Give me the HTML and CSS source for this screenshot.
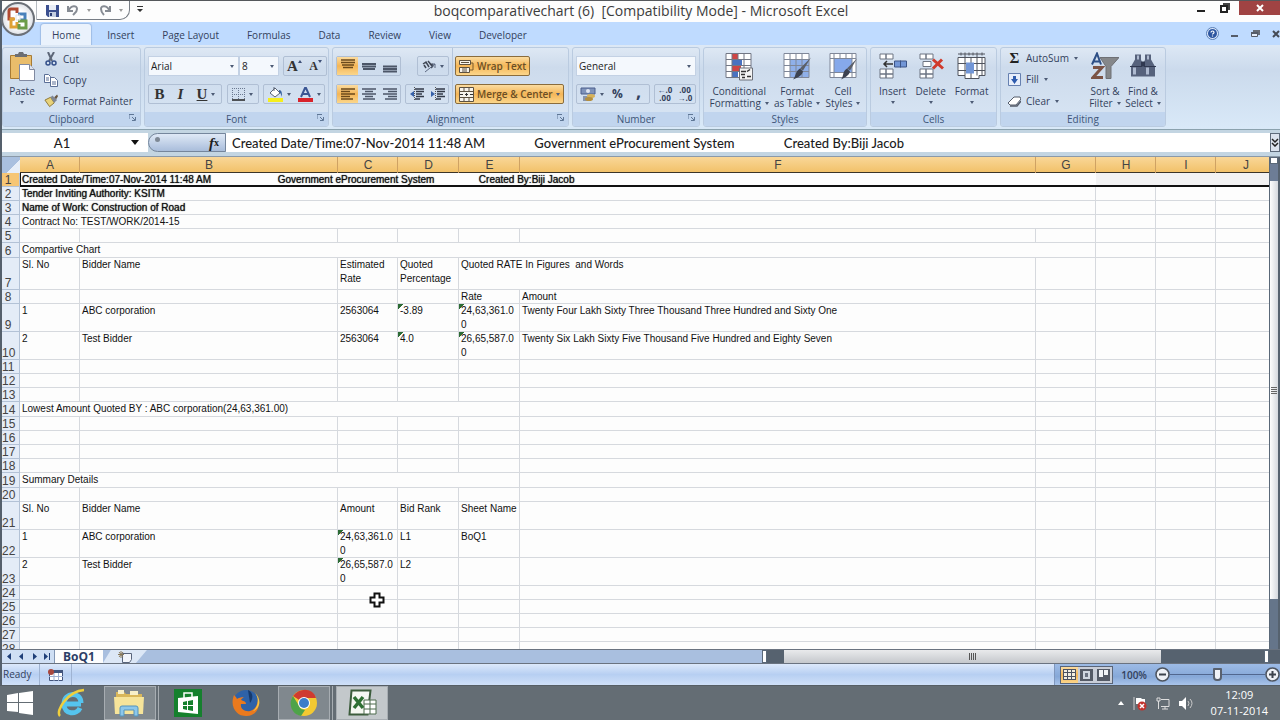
FILE: index.html
```html
<!DOCTYPE html>
<html lang="en">
<head>
    <meta charset="UTF-8">
    <meta name="viewport" content="width=device-width, initial-scale=1.0">
    <title>boqcomparativechart (6) [Compatibility Mode] - Microsoft Excel</title>
    <link rel="stylesheet" href="styles.css">
</head>
<body>
    <div class="window">
        <!-- title bar -->
        <header class="title-bar">
            <div class="quick-access">
                <button aria-label="Save">
                    <svg width="13" height="13" viewBox="0 0 13 13"><path d="M0 1h13v12H2L0 11z" fill="#3b4f8f"/><path d="M3 1h7v5H3z" fill="#e8edf6"/><path d="M3 8h7v5H3z" fill="#c4cfe2"/><path d="M4 9h2v3H4z" fill="#2b3d74"/></svg>
                </button>
                <button aria-label="Undo">
                    <svg width="12" height="12" viewBox="0 0 12 12"><path d="M1 2v5h5M1.500 6.500C4 1 10 1 10 5c0 3-2 4-4 6" fill="none" stroke="#868b93" stroke-width="2"/></svg>
                </button>
                <i class="arrow grey"></i>
                <button aria-label="Redo">
                    <svg width="12" height="12" viewBox="0 0 12 12"><path d="M11 2v5H6M10.500 6.500C8 1 2 1 2 5c0 3 1 4 3 6" fill="none" stroke="#868b93" stroke-width="2"/></svg>
                </button>
                <i class="arrow grey"></i>
            </div>
            <button class="qa-more" aria-label="Customize Quick Access Toolbar">
                <svg width="6" height="7" viewBox="0 0 6 7"><path d="M0 0h6v1H0zM0 3h6L3 6z" fill="#333"/></svg>
            </button>
            <h1>boqcomparativechart (6)&nbsp; [Compatibility Mode] - Microsoft Excel</h1>
            <div class="window-buttons">
                <button aria-label="Minimize"><svg width="8" height="10" viewBox="0 0 8 10"><path d="M0 7h8v2H0z" fill="#222"/></svg></button>
                <button aria-label="Restore"><svg width="10" height="10" viewBox="0 0 10 10"><path d="M1 3h6v6H1z" fill="#fff" stroke="#222" stroke-width="2"/><path d="M3 1h6v6" fill="none" stroke="#444" stroke-width="2"/></svg></button>
                <button class="close" aria-label="Close"><svg width="8" height="8" viewBox="0 0 8 8"><path d="M1 1l6 6M7 1L1 7" stroke="#fff" stroke-width="2"/></svg></button>
            </div>
        </header>
        <button class="office-button" aria-label="Office Button">
            <svg width="24" height="24" viewBox="0 0 24 24" fill="none" stroke-width="3"><path d="M8 12H3V4q0-2 2-2h6v4" stroke="#b04a32"/><path d="M12 7h7v6h-5" stroke="#4a82bb"/><path d="M9 12H5v8h6v-5" stroke="#dfa236"/><path d="M12 14h8v7h-7v-4" stroke="#6c9c48"/><path d="M10 8h4v5h-4z" stroke="#dfe3e8" stroke-width="1"/></svg>
        </button>

        <!-- ribbon tabs -->
        <nav class="tabs">
            <a href="#" class="active">Home</a>
            <a href="#">Insert</a>
            <a href="#">Page Layout</a>
            <a href="#">Formulas</a>
            <a href="#">Data</a>
            <a href="#">Review</a>
            <a href="#">View</a>
            <a href="#">Developer</a>
            <div class="doc-buttons">
                <button aria-label="Help"><svg width="13" height="13" viewBox="0 0 13 13"><circle cx="6.500" cy="6.500" r="6" fill="#dce8fa" stroke="#5b7fb5"/><circle cx="6.500" cy="6.500" r="4.500" fill="#2d56a0"/><path d="M5 5.500c0-2 3-2 3 0 0 1-1.500 1-1.500 2M6.500 8.500v1" fill="none" stroke="#fff" stroke-width="1.200"/></svg></button>
                <button aria-label="Minimize workbook"><svg width="8" height="8" viewBox="0 0 8 8"><path d="M0 5h7v2H0z" fill="#555c68"/></svg></button>
                <button aria-label="Restore workbook"><svg width="9" height="8" viewBox="0 0 9 8"><path d="M2 0h7v5H7V2H2z" fill="#666c76"/><path d="M.5 2.500h6v4h-6z" fill="#e4ecf8" stroke="#555c68"/><path d="M0 2h7v2H0z" fill="#555c68"/></svg></button>
                <button aria-label="Close workbook"><svg width="8" height="8" viewBox="0 0 8 8"><path d="M1 1l6 6M7 1L1 7" stroke="#444a55" stroke-width="2"/></svg></button>
            </div>
        </nav>

        <!-- ribbon -->
        <div class="ribbon">
            <section class="group clipboard">
                <div class="group-body">
                    <button class="big">
                        <svg width="27" height="29" viewBox="0 0 27 29"><path d="M1.500 3.500h21v23h-21z" fill="#e9bd6b" stroke="#a77b35"/><path d="M6 5V2h3l1-2h4l1 2h3v3z" fill="#6b6e73"/><path d="M10.500 12.500h10l5 5v11h-15z" fill="#fff" stroke="#8089a0"/><path d="M20.500 12.500v5h5" fill="#dde3ee" stroke="#8089a0"/></svg>
                        <span>Paste</span><i class="arrow"></i>
                    </button>
                    <div class="list">
                        <button><svg width="14" height="14" viewBox="0 0 14 14"><path d="M4 0l4 9M10 0L5 9" stroke="#5d6778" stroke-width="2"/><circle cx="4" cy="11" r="2" fill="none" stroke="#34508a" stroke-width="1.500"/><circle cx="10" cy="11" r="2" fill="none" stroke="#34508a" stroke-width="1.500"/></svg>Cut</button>
                        <button><svg width="14" height="14" viewBox="0 0 14 14"><path d="M.5 1.500h4l2 2v6h-6zM6.500 4.500h4l3 3v6h-7z" fill="#fff" stroke="#5b6f96"/><path d="M2 5h3M2 7h3M8 9h4M8 11h4" stroke="#5b6f96"/></svg>Copy</button>
                        <button><svg width="14" height="14" viewBox="0 0 15 14"><path d="M1 6l6-3 4 6-5 4z" fill="#e8d27a" stroke="#8b7430"/><path d="M7 3l2-2 5 5-3 3z" fill="#7f8795"/><path d="M11 3l3-3 1 2-2 3z" fill="#6a5640"/></svg>Format Painter</button>
                    </div>
                </div>
                <h2>Clipboard<svg class="launcher" width="7" height="7" viewBox="0 0 7 7"><path d="M0 5V.5h5M3 3l3 3M6.500 3v3.500H3" fill="none" stroke="#5f7796"/></svg></h2>
            </section>

            <section class="group font">
                <div class="group-body rows">
                    <div class="row">
                        <div class="combos">
                            <div class="combo font-name"><select aria-label="Font"><option>Arial</option></select><i class="arrow"></i></div>
                            <div class="combo font-size"><select aria-label="Font size"><option>8</option></select><i class="arrow"></i></div>
                        </div>
                        <div class="set">
                            <button class="serif" aria-label="Grow font">A<svg width="4" height="12" viewBox="0 0 4 12"><path d="M0 3l2-3 2 3z" fill="#3e5078"/></svg></button>
                            <button class="serif small" aria-label="Shrink font">A<svg width="4" height="12" viewBox="0 0 4 12"><path d="M0 0h4L2 3z" fill="#3e5078"/></svg></button>
                        </div>
                    </div>
                    <div class="row">
                        <div class="set">
                            <button class="serif" aria-label="Bold">B</button>
                            <button class="serif italic" aria-label="Italic">I</button>
                            <button class="serif underline drop" aria-label="Underline"><span>U</span><i class="arrow"></i></button>
                        </div>
                        <div class="set">
                            <button class="drop" aria-label="Borders"><svg width="13" height="13" viewBox="0 0 13 13"><path d="M.5 0v12M6.500 0v12M12.500 0v12M0 .5h13M0 6.500h13" stroke="#6a7890" stroke-dasharray="1 1"/><path d="M0 12h13" stroke="#222" stroke-width="1.500"/></svg><i class="arrow"></i></button>
                        </div>
                        <div class="set">
                            <button class="drop" aria-label="Fill color"><svg width="15" height="15" viewBox="0 0 15 15"><path d="M0 11h15v4H0z" fill="#f5ee1c"/><path d="M2 6l5-5 5 5-5 4z" fill="#fff" stroke="#5a6476"/><path d="M6 4V0" stroke="#5a6476"/><path d="M11 3c3 0 3 3 3 7-1-2-1-4-3-5z" fill="#38629e"/></svg><i class="arrow"></i></button>
                            <button class="drop" aria-label="Font color"><svg width="15" height="15" viewBox="0 0 15 15"><path d="M0 11h15v4H0z" fill="#d8232b"/><path d="M3 10L7 1h1l4 9M5 7h5" fill="none" stroke="#3a5594" stroke-width="2"/></svg><i class="arrow"></i></button>
                        </div>
                    </div>
                </div>
                <h2>Font<svg class="launcher" width="7" height="7" viewBox="0 0 7 7"><path d="M0 5V.5h5M3 3l3 3M6.500 3v3.500H3" fill="none" stroke="#5f7796"/></svg></h2>
            </section>

            <section class="group alignment">
                <div class="group-body columns">
                    <div class="rows">
                        <div class="row">
                            <div class="set">
                                <button class="on" aria-label="Top align"><svg width="14" height="14" viewBox="0 0 14 14"><path d="M0 1h14M0 3.500h14M1 6h12M2 8.500h10" stroke="#6b4a1c" stroke-width="1.500"/></svg></button>
                                <button aria-label="Middle align"><svg width="14" height="14" viewBox="0 0 14 14"><path d="M0 5h14M0 7.500h14M1 10h12" stroke="#4c5668" stroke-width="2"/></svg></button>
                                <button aria-label="Bottom align"><svg width="14" height="14" viewBox="0 0 14 14"><path d="M0 7.500h14M0 10h14M0 12.500h14" stroke="#4c5668" stroke-width="2"/></svg></button>
                            </div>
                            <div class="set">
                                <button class="drop" aria-label="Orientation"><svg width="14" height="14" viewBox="0 0 14 14"><path d="M1 5l3-2 3 5M4 9l-2-3M6 2l5 6M8 6c3-2 4 1 1 3" fill="none" stroke="#3f4654" stroke-width="1.500"/><path d="M3 13L13 5M13 5v4M13 5h-3" fill="none" stroke="#5c6880"/></svg><i class="arrow"></i></button>
                            </div>
                        </div>
                        <div class="row">
                            <div class="set">
                                <button class="on" aria-label="Align left"><svg width="14" height="14" viewBox="0 0 14 14"><path d="M0 2h14M0 4.500h9M0 7h14M0 9.500h9M0 12h12" stroke="#6b4a1c" stroke-width="1.500"/></svg></button>
                                <button aria-label="Center"><svg width="14" height="14" viewBox="0 0 14 14"><path d="M0 2h14M3 4.500h8M0 7h14M3 9.500h8M1 12h12" stroke="#4c5668" stroke-width="1.500"/></svg></button>
                                <button aria-label="Align right"><svg width="14" height="14" viewBox="0 0 14 14"><path d="M0 2h14M5 4.500h9M0 7h14M5 9.500h9M2 12h12" stroke="#4c5668" stroke-width="1.500"/></svg></button>
                            </div>
                            <div class="set">
                                <button aria-label="Decrease indent"><svg width="14" height="14" viewBox="0 0 14 14"><path d="M5 2h9M6 4.500h8M6 7h6M6 9.500h8M5 12h5" stroke="#333a48" stroke-width="1.500"/><path d="M4 4v6L0 7z" fill="#3560a8"/><path d="M4.500 0v14" stroke="#555" stroke-dasharray="1 1"/></svg></button>
                                <button aria-label="Increase indent"><svg width="14" height="14" viewBox="0 0 14 14"><path d="M5 2h9M6 4.500h8M6 7h6M6 9.500h8M5 12h5" stroke="#333a48" stroke-width="1.500"/><path d="M0 4v6l4-3z" fill="#3560a8"/><path d="M4.500 0v14" stroke="#555" stroke-dasharray="1 1"/></svg></button>
                            </div>
                        </div>
                    </div>
                    <div class="rows divided">
                        <button class="wide on"><svg width="15" height="15" viewBox="0 0 15 15"><path d="M.5 1.500h11v4H.5zM.5 8.500h10v5H.5z" fill="#f6f3ec" stroke="#5c5140"/><path d="M2 3.500h8M3 10h5M3 12h5" stroke="#5c5140"/><path d="M12 4h2v7h-3" fill="none" stroke="#7a5a2a"/></svg><span>Wrap Text</span></button>
                        <button class="wide on merge"><svg width="15" height="15" viewBox="0 0 15 15"><path d="M.5 .5h14v14H.5z" fill="#f6f3ec" stroke="#5c5140"/><path d="M0 4.500h15M0 10.500h15M5 0v4M10 0v4M5 11v4M10 11v4" stroke="#5c5140"/><path d="M1 7.500h3M11 7.500h3M7.500 6v3M6 7.500h3" stroke="#333"/></svg><span>Merge &amp; Center</span><i class="arrow"></i></button>
                    </div>
                </div>
                <h2>Alignment<svg class="launcher" width="7" height="7" viewBox="0 0 7 7"><path d="M0 5V.5h5M3 3l3 3M6.500 3v3.500H3" fill="none" stroke="#5f7796"/></svg></h2>
            </section>

            <section class="group number">
                <div class="group-body rows">
                    <div class="combo"><select aria-label="Number format"><option>General</option></select><i class="arrow"></i></div>
                    <div class="row">
                        <div class="set">
                            <button class="drop" aria-label="Accounting format"><svg width="16" height="15" viewBox="0 0 16 15"><path d="M1 1h14v6H1z" fill="#7f93ba" stroke="#4c5f8c"/><circle cx="8" cy="4" r="2" fill="#dfe6f2"/><path d="M3 9h7v5H3z" fill="#8794ad"/><ellipse cx="11" cy="9" rx="4" ry="2" fill="#d7b25a"/><ellipse cx="9" cy="12" rx="4" ry="2" fill="#b58f3e"/></svg><i class="arrow"></i></button>
                            <button class="symbol" aria-label="Percent style">%</button>
                            <button class="symbol comma" aria-label="Comma style">,</button>
                        </div>
                        <div class="set">
                            <button class="decimals" aria-label="Increase decimal"><span>&#8592;.0</span><span>.00</span></button>
                            <button class="decimals" aria-label="Decrease decimal"><span>.00</span><span>&#8594;.0</span></button>
                        </div>
                    </div>
                </div>
                <h2>Number<svg class="launcher" width="7" height="7" viewBox="0 0 7 7"><path d="M0 5V.5h5M3 3l3 3M6.500 3v3.500H3" fill="none" stroke="#5f7796"/></svg></h2>
            </section>

            <section class="group styles">
                <div class="group-body bigs">
                    <button class="big">
                        <svg width="28" height="28" viewBox="0 0 28 28"><path d="M1 1h25v24H1z" fill="#fff"/><path d="M7 1h6v6H7zM7 13h9v6H7z" fill="#cf4545"/><path d="M7 7h10v6H7zM7 19h6v6H7z" fill="#4a72c0"/><path d="M1 1h25M1 7h25M1 13h25M1 19h25M1 25h25M1 1v24M7 1v24M13 1v6M19 1v24M26 1v24" stroke="#727784"/><path d="M14.500 15.500h13v12h-13z" fill="#f3f3f3" stroke="#6b6f78"/><path d="M16 19h5M16 22h4M22 19l3-2M22 24h4M17 25h3" stroke="#333" stroke-width="1.500"/></svg>
                        <span>Conditional</span><span>Formatting<i class="arrow"></i></span>
                    </button>
                    <button class="big">
                        <svg width="28" height="28" viewBox="0 0 28 28"><path d="M1 1h25v24H1z" fill="#fff"/><path d="M7 7h19v18H7z" fill="#8fb0ea"/><path d="M1 1h25M1 7h25M1 13h25M1 19h25M1 25h25M1 1v24M7 1v24M13 1v24M19 1v24M26 1v24" stroke="#7f8798"/><path d="M28 5L20 18l-3-2z" fill="#5b5f68"/><path d="M17 16l3 3c-1 4-5 6-10 8 3-3 2-8 7-11z" fill="#3c4250"/></svg>
                        <span>Format</span><span>as Table<i class="arrow"></i></span>
                    </button>
                    <button class="big">
                        <svg width="28" height="28" viewBox="0 0 28 28"><path d="M1 1h26v24H1z" fill="#fff"/><path d="M5 6h18v14H5z" fill="#86a9ea"/><path d="M1 1h26v24H1zM1 6h26M1 20h26M5 1v24M23 1v24M11 1v5M17 1v5" fill="none" stroke="#7f8798"/><path d="M28 6l-7 12-3-2z" fill="#5b5f68"/><path d="M18 16l3 3c-1 4-5 6-9 8 3-3 1-8 6-11z" fill="#3c4250"/></svg>
                        <span>Cell</span><span>Styles<i class="arrow"></i></span>
                    </button>
                </div>
                <h2>Styles</h2>
            </section>

            <section class="group cells">
                <div class="group-body bigs">
                    <button class="big">
                        <svg width="28" height="28" viewBox="0 0 28 28"><path d="M1 1.500h6v5H1zM7 1.500h7v5H7zM1 16.500h6v5H1zM7 16.500h7v5H7zM1 21.500h6v4H1zM7 21.500h7v4H7z" fill="#fff" stroke="#6d7482"/><path d="M15.500 8.500h12v6h-12z" fill="#7296d6" stroke="#3c5486"/><path d="M21.500 8v7" stroke="#3c5486"/><path d="M5 11.500h9M8 8.500l-3 3 3 3" fill="none" stroke="#333" stroke-width="1.500"/></svg>
                        <span>Insert</span><i class="arrow"></i>
                    </button>
                    <button class="big">
                        <svg width="28" height="28" viewBox="0 0 28 28"><path d="M3 1.500h6v5H3zM9 1.500h7v5H9zM6 9h8v5H6zM3 16.500h6v5H3zM9 16.500h7v5H9zM3 21.500h6v4H3zM9 21.500h7v4H9z" fill="#fff" stroke="#6d7482"/><path d="M16 7l10 9M25 7l-9 9" stroke="#d03a2c" stroke-width="3"/></svg>
                        <span>Delete</span><i class="arrow"></i>
                    </button>
                    <button class="big">
                        <svg width="30" height="28" viewBox="0 0 30 28"><path d="M1 5h27v18H22v3H8v-3H1z" fill="#fff" stroke="#50545e"/><path d="M1 11h27M1 18h27M8 0v23M14 5v21M20 0v23M25 5v18M1 1.500h27M4 0v3M12 0v3M16 0v3M25 0v3" stroke="#50545e"/><path d="M9 10h8v11H9z" fill="#7296d6"/></svg>
                        <span>Format</span><i class="arrow"></i>
                    </button>
                </div>
                <h2>Cells</h2>
            </section>

            <section class="group editing">
                <div class="group-body">
                    <div class="list">
                        <button><span class="sigma">&Sigma;</span>AutoSum<i class="arrow"></i></button>
                        <button><svg width="13" height="13" viewBox="0 0 13 13"><path d="M.5 .5h12v12H.5z" fill="#e7eefb" stroke="#6680b0"/><path d="M5 3h3v3h2l-3.500 5L3 6h2z" fill="#2f5cae"/></svg>Fill<i class="arrow"></i></button>
                        <button><svg width="13" height="13" viewBox="0 0 13 13"><path d="M6 2h6l1 2-5 6H2L0 8z" fill="#fff" stroke="#555c6a"/><path d="M2 11h7l4-5" fill="none" stroke="#555c6a" stroke-width="1.500"/></svg>Clear<i class="arrow"></i></button>
                    </div>
                    <button class="big">
                        <svg width="28" height="28" viewBox="0 0 28 28"><path d="M9 5h19l-8 9v12h-5V14z" fill="#85878a" stroke="#6e7075"/><path d="M1 12L6 1l4 11M3 9h6" fill="none" stroke="#2d4f86" stroke-width="2"/><path d="M2 15h9L2 25h10" fill="none" stroke="#7b5345" stroke-width="3"/></svg>
                        <span>Sort &amp;</span><span>Filter<i class="arrow"></i></span>
                    </button>
                    <button class="big">
                        <svg width="28" height="28" viewBox="0 0 28 28"><path d="M6 2h6v5l2 6v11H2V14l4-7zM16 2h6v5l4 7v10H14V13l2-6z" fill="#56627c"/><path d="M4 15h3v7H4zM17 15h3v7h-3zM8 3h2v4H8zM18 3h2v4h-2z" fill="#aebad0"/><path d="M12 9h4v5h-4z" fill="#2f3850"/><path d="M1 14h12M15 14h12" stroke="#2f3850"/></svg>
                        <span>Find &amp;</span><span>Select<i class="arrow"></i></span>
                    </button>
                </div>
                <h2>Editing</h2>
            </section>
        </div>

        <!-- formula bar -->
        <div class="formula-bar">
            <input class="name-box" type="text" value="A1" aria-label="Name box">
            <button class="name-drop" aria-label="Names"><svg width="8" height="5" viewBox="0 0 8 5"><path d="M0 0h8L4 5z" fill="#111"/></svg></button>
            <div class="fx"><i class="knob"></i><button aria-label="Insert function"><em>f</em><small>x</small></button></div>
            <input class="formula" type="text" aria-label="Formula" value="Created Date/Time:07-Nov-2014 11:48 AM               Government eProcurement System               Created By:Biji Jacob">
            <button class="expand" aria-label="Expand formula bar"><svg width="8" height="9" viewBox="0 0 8 9"><path d="M1 1l3 3 3-3M1 5l3 3 3-3" fill="none" stroke="#222" stroke-width="1.500"/></svg></button>
        </div>

        <!-- worksheet -->
        <main class="sheet">
            <div class="grid">
                <table>
                    <colgroup>
                        <col class="c-head"><col class="c-std"><col class="c-b"><col class="c-std"><col class="c-rate"><col class="c-rate"><col><col class="c-std"><col class="c-std"><col class="c-std"><col class="c-std">
                    </colgroup>
                    <thead>
                        <tr><th class="corner"></th><th>A</th><th>B</th><th>C</th><th>D</th><th>E</th><th>F</th><th>G</th><th>H</th><th>I</th><th>J</th></tr>
                    </thead>
                    <tbody>
                        <tr class="selected"><th>1</th><td colspan="7" class="strong">Created Date/Time:07-Nov-2014 11:48 AM                        Government eProcurement System                Created By:Biji Jacob</td><td></td><td></td><td></td></tr>
                        <tr><th>2</th><td colspan="7" class="strong">Tender Inviting Authority: KSITM</td><td></td><td></td><td></td></tr>
                        <tr><th>3</th><td colspan="7" class="strong">Name of Work: Construction of Road</td><td></td><td></td><td></td></tr>
                        <tr><th>4</th><td colspan="7">Contract No: TEST/WORK/2014-15</td><td></td><td></td><td></td></tr>
                        <tr><th>5</th><td></td><td></td><td></td><td></td><td></td><td></td><td></td><td></td><td></td><td></td></tr>
                        <tr class="section"><th>6</th><td colspan="7">Compartive Chart</td><td></td><td></td><td></td></tr>
                        <tr class="heading"><th>7</th><td>Sl. No</td><td>Bidder Name</td><td>Estimated<br>Rate</td><td>Quoted<br>Percentage</td><td colspan="2">Quoted RATE In Figures  and Words</td><td></td><td></td><td></td><td></td></tr>
                        <tr><th>8</th><td></td><td></td><td></td><td></td><td>Rate</td><td>Amount</td><td></td><td></td><td></td><td></td></tr>
                        <tr class="tall"><th>9</th><td>1</td><td>ABC corporation</td><td>2563064</td><td class="flag">-3.89</td><td class="flag">24,63,361.00</td><td>Twenty Four Lakh Sixty Three Thousand Three Hundred and Sixty One</td><td></td><td></td><td></td><td></td></tr>
                        <tr class="tall"><th>10</th><td>2</td><td>Test Bidder</td><td>2563064</td><td class="flag">4.0</td><td class="flag">26,65,587.00</td><td>Twenty Six Lakh Sixty Five Thousand Five Hundred and Eighty Seven</td><td></td><td></td><td></td><td></td></tr>
                        <tr><th>11</th><td></td><td></td><td></td><td></td><td></td><td></td><td></td><td></td><td></td><td></td></tr>
                        <tr><th>12</th><td></td><td></td><td></td><td></td><td></td><td></td><td></td><td></td><td></td><td></td></tr>
                        <tr><th>13</th><td></td><td></td><td></td><td></td><td></td><td></td><td></td><td></td><td></td><td></td></tr>
                        <tr class="section"><th>14</th><td colspan="5">Lowest Amount Quoted BY : ABC corporation(24,63,361.00)</td><td></td><td></td><td></td><td></td><td></td></tr>
                        <tr><th>15</th><td></td><td></td><td></td><td></td><td></td><td></td><td></td><td></td><td></td><td></td></tr>
                        <tr><th>16</th><td></td><td></td><td></td><td></td><td></td><td></td><td></td><td></td><td></td><td></td></tr>
                        <tr><th>17</th><td></td><td></td><td></td><td></td><td></td><td></td><td></td><td></td><td></td><td></td></tr>
                        <tr><th>18</th><td></td><td></td><td></td><td></td><td></td><td></td><td></td><td></td><td></td><td></td></tr>
                        <tr class="section"><th>19</th><td colspan="5">Summary Details</td><td></td><td></td><td></td><td></td><td></td></tr>
                        <tr><th>20</th><td></td><td></td><td></td><td></td><td></td><td></td><td></td><td></td><td></td><td></td></tr>
                        <tr class="tall"><th>21</th><td>Sl. No</td><td>Bidder Name</td><td>Amount</td><td>Bid Rank</td><td>Sheet Name</td><td></td><td></td><td></td><td></td><td></td></tr>
                        <tr class="tall"><th>22</th><td>1</td><td>ABC corporation</td><td class="flag">24,63,361.00</td><td>L1</td><td>BoQ1</td><td></td><td></td><td></td><td></td><td></td></tr>
                        <tr class="tall"><th>23</th><td>2</td><td>Test Bidder</td><td class="flag">26,65,587.00</td><td>L2</td><td></td><td></td><td></td><td></td><td></td><td></td></tr>
                        <tr><th>24</th><td></td><td></td><td></td><td></td><td></td><td></td><td></td><td></td><td></td><td></td></tr>
                        <tr><th>25</th><td></td><td></td><td></td><td></td><td></td><td></td><td></td><td></td><td></td><td></td></tr>
                        <tr><th>26</th><td></td><td></td><td></td><td></td><td></td><td></td><td></td><td></td><td></td><td></td></tr>
                        <tr><th>27</th><td></td><td></td><td></td><td></td><td></td><td></td><td></td><td></td><td></td><td></td></tr>
                        <tr><th>28</th><td></td><td></td><td></td><td></td><td></td><td></td><td></td><td></td><td></td><td></td></tr>
                    </tbody>
                </table>
                <svg class="cursor" width="16" height="16" viewBox="0 0 16 16"><path d="M5.500 1.500h5v4h4v5h-4v4h-5v-4h-4v-5h4z" fill="#fff" stroke="#111" stroke-width="2"/></svg>
            </div>
            <div class="v-scroll">
                <i class="split"></i>
                <i class="up"></i>
                <i class="thumb"></i>
            </div>
        </main>

        <!-- sheet tabs -->
        <div class="sheet-bar">
            <div class="sheet-nav">
                <button aria-label="First sheet"><svg width="7" height="7" viewBox="0 0 7 7"><path d="M1 0v7M6 0v7L2 3.500z" fill="#1f3f78"/></svg></button>
                <button aria-label="Previous sheet"><svg width="7" height="7" viewBox="0 0 7 7"><path d="M5 0v7L1 3.500z" fill="#1f3f78"/></svg></button>
                <button aria-label="Next sheet"><svg width="7" height="7" viewBox="0 0 7 7"><path d="M2 0v7l4-3.500z" fill="#1f3f78"/></svg></button>
                <button aria-label="Last sheet"><svg width="7" height="7" viewBox="0 0 7 7"><path d="M0 0v7l4-3.500zM5 0h1v7H5z" fill="#1f3f78"/></svg></button>
            </div>
            <a href="#" class="sheet-tab">BoQ1</a>
            <button class="new-sheet" aria-label="Insert worksheet"><svg width="14" height="12" viewBox="0 0 14 12"><path d="M4.500 2.500h9v6l-2 3h-7z" fill="#f2f5fb" stroke="#59657c"/><path d="M3 0v7M0 3.500h6M1 1l4 5M5 1L1 6" stroke="#8a7a5a"/></svg></button>
            <div class="h-scroll">
                <i class="split"></i>
                <i class="left"></i>
                <i class="thumb"></i>
                <i class="track"></i>
                <i class="split"></i>
            </div>
        </div>

        <!-- status bar -->
        <footer class="status-bar">
            <span class="ready">Ready</span>
            <button class="macro" aria-label="Record macro"><svg width="15" height="12" viewBox="0 0 15 12"><path d="M1.500 1.500h13v10h-13z" fill="#fff" stroke="#41547c"/><path d="M1 1h14v3H1z" fill="#41547c"/><path d="M1 7.500h14M6 4v8M10.500 4v8" stroke="#9fb0d0"/><circle cx="3" cy="3" r="3" fill="#a8473d"/></svg></button>
            <div class="status-right">
                <div class="views">
                    <button class="on" aria-label="Normal"><svg width="13" height="11" viewBox="0 0 13 11"><path d="M0 0h13v11H0z" fill="#4d5260"/><path d="M1 1h3v2H1zM5 1h3v2H5zM9 1h3v2H9zM1 4h3v3H1zM5 4h3v3H5zM9 4h3v3H9zM1 8h3v2H1zM5 8h3v2H5zM9 8h3v2H9z" fill="#f4efe0"/></svg></button>
                    <button aria-label="Page layout"><svg width="13" height="12" viewBox="0 0 13 12"><path d="M0 0h13v12H0z" fill="#545a66"/><path d="M3 2h7v8H3z" fill="#cfd5df"/><path d="M5 4h3v4H5z" fill="#6a7180"/></svg></button>
                    <button aria-label="Page break preview"><svg width="13" height="12" viewBox="0 0 13 12"><path d="M0 0h13v12H0z" fill="#545a66"/><path d="M2 1h4v7H2zM7 1h4v5H7z" fill="#f0f2f6"/></svg></button>
                </div>
                <button class="zoom-level">100%</button>
                <button class="round" aria-label="Zoom out"><svg width="15" height="15" viewBox="0 0 15 15"><circle cx="7.500" cy="7.500" r="6.500" fill="#eef1f6" stroke="#4d545f" stroke-width="1.500"/><path d="M4 7.500h7" stroke="#3c424c" stroke-width="2"/></svg></button>
                <input class="zoom" type="range" min="0" max="100" value="50" aria-label="Zoom">
                <button class="round" aria-label="Zoom in"><svg width="15" height="15" viewBox="0 0 15 15"><circle cx="7.500" cy="7.500" r="6.500" fill="#eef1f6" stroke="#4d545f" stroke-width="1.500"/><path d="M4 7.500h7M7.500 4v7" stroke="#3c424c" stroke-width="2"/></svg></button>
            </div>
        </footer>
    </div>

    <!-- taskbar -->
    <div class="taskbar">
        <button class="task" aria-label="Start"><svg width="26" height="24" viewBox="0 0 26 24"><path d="M0 4l11-2v9H0zM12 2l14-2v11H12zM0 12h11v9L0 20zM12 12h14v12l-14-2z" fill="#fff"/></svg></button>
        <button class="task" aria-label="Internet Explorer"><svg width="30" height="30" viewBox="0 0 30 30"><path d="M8 16h16M24 15c0-12-17-11-17 1 0 11 13 11 16 4" fill="none" stroke="#55c4ee" stroke-width="5"/><path d="M3 28C-2 23 11 3 27 2" fill="none" stroke="#f0cf3c" stroke-width="2.500"/></svg></button>
        <button class="task open stacked" aria-label="File Explorer"><svg width="32" height="28" viewBox="0 0 32 28"><path d="M2 3h8l2 2h16v19H2z" fill="#d9b75a"/><path d="M4 1h6v4H4zM16 2h8v4h-8z" fill="#f7efc8"/><path d="M0 8h30l-1 17H1z" fill="#f6e49a"/><path d="M6 27v-8q0-2 2-2h14q2 0 2 2v8h-4v-6H10v6z" fill="#8cc7ea" stroke="#5393bd"/></svg></button>
        <button class="task" aria-label="Store"><svg width="28" height="28" viewBox="0 0 28 28"><path d="M0 0h28v28H0z" fill="#15802d"/><path d="M4 9l20-2v18l-20-2z" fill="#fff"/><path d="M10 9V4h8v4" fill="none" stroke="#fff" stroke-width="1.500"/><path d="M9 13l4-1v4H9zM14 12l5-1v5h-5zM9 17h4v4l-4-1zM14 17h5v5l-5-1z" fill="#15802d"/></svg></button>
        <button class="task" aria-label="Firefox"><svg width="30" height="30" viewBox="0 0 30 30"><circle cx="15" cy="15" r="13" fill="#2e62a8"/><path d="M17 2c6 3 5 9 2 13z" fill="#163a6d"/><path d="M3 7C-2 20 7 29 16 28c9 0 14-9 11-18 0 6-2 11-8 13-5 1-10-2-9-7l5 0c0-3-3-3-5-4 1-2 2-2 3-3-3 0-6 1-7 2C5 9 5 9 3 7z" fill="#ea7a1e"/><path d="M24 5c4 5 4 13-2 18 7-2 9-12 2-18z" fill="#f6c443"/></svg></button>
        <button class="task open stacked" aria-label="Chrome"><svg width="28" height="28" viewBox="0 0 28 28"><circle cx="14" cy="14" r="13" fill="#f3c932"/><path d="M14 14L3 7C10-2 23-1 26 9H14z" fill="#cf3b30"/><path d="M3 7l8 13 4 1-4 6C1 25-2 14 3 7z" fill="#4ea349"/><circle cx="14" cy="14" r="6" fill="#fff"/><circle cx="14" cy="14" r="5" fill="#3c7cc9"/></svg></button>
        <button class="task open current" aria-label="Excel"><svg width="30" height="28" viewBox="0 0 30 28"><path d="M4.500 1.500h19l-3 24H2.500z" fill="#f5f7f2" stroke="#3c5c3c" stroke-width="2"/><path d="M17 11h12v14H17z" fill="#fff" stroke="#4d6b4d"/><path d="M17 15h12M17 20h12M23 11v14" stroke="#4d6b4d"/><path d="M7 8l9 11M16 8L7 19" stroke="#2f7034" stroke-width="3.500"/></svg></button>
        <div class="tray">
            <button aria-label="Show hidden icons"><svg width="6" height="4" viewBox="0 0 6 4"><path d="M0 4l3-4 3 4z" fill="#fff"/></svg></button>
            <button aria-label="Action Center"><svg width="14" height="15" viewBox="0 0 14 15"><path d="M1 1v13" stroke="#ccc"/><path d="M3 2h5l1 1h3v5H3z" fill="#fff"/><circle cx="9" cy="10" r="4.500" fill="#c2332d"/><path d="M7 8l4 4M11 8l-4 4" stroke="#fff" stroke-width="1.500"/></svg></button>
            <button aria-label="Network"><svg width="14" height="13" viewBox="0 0 14 13"><path d="M5 2.500h8v7H5M9 10v2M6 12h6" fill="none" stroke="#ddd"/><path d="M1 1h3v3H1zM2.500 4v8" fill="none" stroke="#ddd"/></svg></button>
            <button aria-label="Volume"><svg width="15" height="13" viewBox="0 0 15 13"><path d="M0 4h3l4-4v13L3 9H0z" fill="#fff"/><path d="M9 4q2 2 0 5M11 2q4 4 0 9" fill="none" stroke="#ccc"/></svg></button>
            <div class="clock"><time>12:09</time><time>07-11-2014</time></div>
        </div>
    </div>
</body>
</html>
```
FILE: styles.css
```css
* {
    box-sizing: border-box;
}
body {
    margin: 0;
    height: 100vh;
    display: flex;
    flex-direction: column;
    overflow: hidden;
    background-color: #646d74;
    font-family: "Open Sans", "Noto Sans", sans-serif;
    font-size: 10px;
    font-weight: 500;
    line-height: 12px;
    color: #33415c;
}
button, input, select {
    font: inherit;
    color: inherit;
    margin: 0;
    padding: 0;
    border: none;
    background: none;
    border-radius: 0;
}
button {
    display: flex;
    align-items: center;
    justify-content: center;
}
a {
    color: inherit;
    text-decoration: none;
}
svg {
    display: block;
    flex-shrink: 0;
}
.arrow {
    display: inline-block;
    flex-shrink: 0;
    border: 2px solid transparent;
    border-top: 3px solid #4d5b75;
    border-bottom: 0;
}
.arrow.grey {
    border-top-color: #9a9a9a;
}

.window {
    flex: 1;
    min-height: 0;
    display: flex;
    flex-direction: column;
    position: relative;
    border-top: 1px solid #55585c;
    border-left: 2px solid #55606c;
    background-color: #bfdbff;
}

/* title bar */
.title-bar {
    display: flex;
    height: 21px;
    background-color: #fdfdfd;
}
.quick-access {
    display: flex;
    align-items: center;
    gap: 8px;
    width: 94px;
    height: 19px;
    margin-left: 34px;
    padding-left: 9px;
    border: 1px solid #777d85;
    border-top: none;
    border-radius: 0 0 10px 0;
    border-left-color: #b5bac0;
}
.qa-more {
    margin: 0 0 4px 7px;
}
.title-bar h1 {
    flex: 1;
    margin: 0;
    padding-right: 50px;
    text-align: center;
    font-size: 14px;
    line-height: 20px;
    font-weight: normal;
    color: #3c3c3c;
    white-space: nowrap;
}
.window-buttons {
    display: flex;
    align-items: flex-start;
}
.window-buttons button {
    width: 24px;
    height: 14px;
}
.window-buttons .close {
    width: 41px;
    margin-left: 2px;
    background-color: #a04343;
}
.office-button {
    position: absolute;
    top: 1px;
    left: -1px;
    width: 34px;
    height: 34px;
    border: 2px solid #6b7077;
    border-radius: 50%;
    background: radial-gradient(#fff 40%, #c4c9d2);
}

/* tabs */
.tabs {
    display: flex;
    align-items: flex-end;
    height: 23px;
    padding-left: 39px;
}
.tabs a {
    height: 21px;
    padding: 0 14px;
    line-height: 22px;
}
.tabs .active {
    padding: 0 11px;
    margin-right: 2px;
    border-radius: 3px 3px 0 0;
    background-color: #eaf2fc;
    box-shadow: 0 0 1px 1px #9fbde6;
}
.doc-buttons {
    display: flex;
    align-self: center;
    gap: 12px;
    margin-left: auto;
}

/* ribbon */
.ribbon {
    display: flex;
    gap: 3px;
    height: 84px;
    padding: 2px 0;
    background: linear-gradient(#dde8f5, #cbdaec 30%, #d9e9f8);
}
.group {
    display: flex;
    flex-direction: column;
    border: 1px solid #bacbe0;
    border-radius: 3px;
    background: linear-gradient(#dee8f4, #cddbec 25%, #d8e5f4);
    overflow: hidden;
}
.clipboard { width: 139px; }
.font { width: 185px; }
.alignment { width: 237px; }
.number { width: 128px; }
.styles { width: 164px; }
.cells { width: 127px; }
.editing { width: 166px; }
.group-body {
    flex: 1;
    display: flex;
    padding: 0 3px;
}
.group h2 {
    position: relative;
    margin: 0;
    font-size: 10px;
    line-height: 14px;
    font-weight: 500;
    text-align: center;
    color: #3f5679;
    background-color: #c1d5ee;
}
.launcher {
    position: absolute;
    right: 4px;
    top: 2px;
}
.big {
    flex-direction: column;
    justify-content: flex-start;
    padding-top: 4px;
    white-space: nowrap;
}
.big svg {
    height: 29px;
    margin-bottom: 4px;
}
.big > .arrow {
    margin-top: 4px;
}
.big span .arrow {
    margin: 0 0 2px 4px;
}
.bigs {
    justify-content: space-around;
}
.list {
    display: flex;
    flex-direction: column;
    justify-content: space-around;
    align-items: flex-start;
    padding-left: 6px;
}
.list button {
    gap: 5px;
    white-space: nowrap;
}
.clipboard .big {
    width: 32px;
}
.sigma {
    width: 13px;
    font-family: "Liberation Serif", serif;
    font-size: 15px;
    font-weight: bold;
    color: #222;
}
.editing .list {
    padding-left: 4px;
}
.editing .big {
    width: 39px;
}
.editing .list + .big {
    margin-left: 8px;
}
.rows {
    display: flex;
    flex-direction: column;
    justify-content: space-evenly;
}
.row {
    display: flex;
    justify-content: space-between;
    gap: 4px;
}
.set {
    display: flex;
    height: 20px;
    border: 1px solid #b0bfd4;
    border-radius: 2px;
}
.set button {
    width: 21px;
}
.set .drop {
    width: 30px;
    gap: 4px;
}
.on {
    background: linear-gradient(#fbdca0, #f5b657 50%, #fbd68b);
}
.serif {
    font-family: "Liberation Serif", serif;
    font-size: 15px;
    font-weight: bold;
    color: #333;
}
.serif.small {
    font-size: 12px;
}
.italic {
    font-style: italic;
}
.underline span {
    text-decoration: underline;
}
.combos {
    display: flex;
}
.combo {
    position: relative;
    height: 20px;
    border: 1px solid #c3d1e4;
    background-color: #f4f8fd;
}
.font-name { width: 91px; }
.font-size { width: 40px; }
.combo select {
    appearance: none;
    width: 100%;
    height: 18px;
    padding-left: 2px;
    color: #222;
}
.combo .arrow {
    position: absolute;
    right: 4px;
    top: 8px;
}
.columns {
    gap: 3px;
}
.divided {
    padding-left: 2px;
    border-left: 1px solid #b4c5dc;
    align-items: flex-start;
}
.wide {
    height: 20px;
    padding: 0 3px;
    gap: 3px;
    border: 1px solid #8a6c3c;
    border-radius: 2px;
    font-weight: 600;
    white-space: nowrap;
    color: #6b4f26;
}
.symbol {
    font-size: 12px;
    font-weight: bold;
}
.comma {
    padding-bottom: 7px;
    font-size: 18px;
}
.set .decimals {
    width: 20px;
    flex-direction: column;
    font-size: 8px;
    line-height: 8px;
    font-weight: bold;
}

/* formula bar */
.formula-bar {
    display: flex;
    height: 28px;
    padding: 3px 0 4px;
    border-top: 1px solid #8ba2ae;
    border-bottom: 1px solid #8a99a8;
    background-color: #c3d5e2;
    font-family: Lato, "Open Sans", sans-serif;
    font-size: 13px;
    color: #1c1c1c;
}
.name-box {
    width: 120px;
    text-align: center;
    background-color: #fff;
}
.name-drop {
    width: 26px;
    background-color: #fff;
}
.fx {
    display: flex;
    justify-content: space-between;
    width: 78px;
    padding: 3px 6px;
    border: 1px solid #75869c;
    border-radius: 10px 0 0 10px;
    background: linear-gradient(#dfe9f6, #a9bddb);
}
.knob {
    width: 5px;
    height: 5px;
    border-radius: 50%;
    background-color: #7e8895;
}
.fx button {
    font-family: "Liberation Serif", serif;
    font-weight: bold;
    font-size: 15px;
}
.fx small {
    font-size: 10px;
}
.formula {
    flex: 1;
    min-width: 0;
    padding-left: 6px;
    background-color: #fff;
}
.expand {
    width: 10px;
    border: 1px solid #5d6a7a;
    background-color: #dbe3ee;
}

/* worksheet */
.sheet {
    flex: 1;
    min-height: 0;
    display: flex;
}
.grid {
    flex: 1;
    position: relative;
    overflow: hidden;
    background-color: #fdfdfd;
    font-family: "Liberation Sans", Arial, sans-serif;
}
table {
    width: calc(100% + 7px);
    table-layout: fixed;
    border-collapse: collapse;
}
.c-head { width: 18px; }
.c-std { width: 60px; }
.c-rate { width: 61px; }
.c-b { width: 258px; }
th, td {
    padding: 0;
    height: 14px;
    line-height: 14px;
}
td {
    padding: 0 2px;
    font-size: 10px;
    font-weight: normal;
    text-align: left;
    vertical-align: top;
    white-space: pre-wrap;
    color: #111;
    box-shadow: inset -1px -1px #d6d9de;
}
th {
    font-size: 12px;
    font-weight: normal;
    color: #444;
}
thead th {
    height: 16px;
    line-height: 15px;
    background: linear-gradient(#f9d798, #f1c067);
    box-shadow: inset -1px 0 #cfa263, inset 0 -1px #3b3428;
}
thead .corner {
    background: linear-gradient(135deg, #a9c0df 60%, #e6eef8 60%);
    box-shadow: none;
}
tbody th {
    padding-right: 6px;
    vertical-align: bottom;
    background-color: #e4ecf7;
    box-shadow: inset -1px -1px #b3c2d6;
}
.section td, .section th { height: 15px; }
.tall td, .tall th { height: 28px; }
.heading td, .heading th { height: 32px; }
.strong {
    text-shadow: 0 0 1px #222;
}
.selected th {
    background-color: #f6c675;
}
.selected td {
    background-color: #f2f2f3;
    box-shadow: inset 0 -2px #111;
}
.selected .strong {
    background-color: #fdfdfd;
    box-shadow: inset 1px -2px #111;
}
.flag {
    word-break: break-all;
    background: linear-gradient(135deg, #2c6b35 4px, transparent 4px);
}
.cursor {
    position: absolute;
    left: 367px;
    top: 435px;
}

/* scroll bars */
.v-scroll {
    display: flex;
    flex-direction: column;
    width: 11px;
    border-left: 1px solid #5a6878;
    border-right: 2px solid #56626f;
    background-color: #65758a;
}
.v-scroll .split {
    height: 7px;
    border: 1px solid #5a6878;
    background-color: #fff;
}
.v-scroll .up {
    height: 17px;
    background-color: #6d7d96;
}
.v-scroll .thumb {
    height: 85%;
    background: repeating-linear-gradient(#666 0 1px, transparent 1px 2px) center / 6px 7px no-repeat, linear-gradient(to right, #fdfdfd, #d5d8de);
}
.sheet-bar {
    display: flex;
    height: 15px;
    border-top: 1px solid #6a7380;
    border-bottom: 1px solid #6a7380;
    background-color: #a9bfdf;
}
.sheet-nav {
    display: flex;
    width: 53px;
    justify-content: space-around;
    background-color: #cfdff4;
    border-right: 1px solid #8296b4;
}
.sheet-tab {
    padding: 0 8px;
    font-size: 12px;
    line-height: 13px;
    font-weight: bold;
    color: #2b3d66;
    background-color: #fdfdfd;
}
.new-sheet {
    width: 44px;
    background-color: #dce7f6;
    clip-path: polygon(18% 0, 100% 0, 75% 100%, 0 100%);
}
.h-scroll {
    display: flex;
    width: 518px;
    margin-left: auto;
    padding-right: 11px;
    background-color: #56626f;
}
.h-scroll .split {
    width: 5px;
    border: 1px solid #5a6878;
    background-color: #fff;
}
.h-scroll .left {
    width: 17px;
}
.h-scroll .thumb {
    flex: 11;
    background: repeating-linear-gradient(to right, #555 0 1px, transparent 1px 2px) center / 8px 7px no-repeat, linear-gradient(#e9eaec, #c5c8cc);
}
.h-scroll .track {
    flex: 3;
}

/* status bar */
.status-bar {
    display: flex;
    height: 21px;
    background: linear-gradient(#dce9fb, #b7cff2 50%, #cfe0f8);
}
.ready {
    width: 38px;
    padding-left: 1px;
    line-height: 20px;
    border-right: 1px solid #9fb3d2;
}
.macro {
    width: 32px;
    border-right: 1px solid #9fb3d2;
}
.status-right {
    display: flex;
    align-items: center;
    margin-left: auto;
    border-left: 1px solid #7f97bd;
    padding-left: 5px;
    background: linear-gradient(#9dbbe6, #86a8d8 60%, #a9c4ea);
}
.views {
    display: flex;
    border: 1px solid #5a6578;
    background-color: #c9ced8;
}
.views button {
    width: 17px;
    height: 16px;
}
.zoom-level {
    margin: 0 8px;
    font-weight: 600;
}
.zoom {
    appearance: none;
    width: 95px;
    height: 15px;
    background: linear-gradient(#51678f, #51678f) center / 100% 1px no-repeat;
}
.zoom::-webkit-slider-thumb {
    appearance: none;
    width: 9px;
    height: 13px;
    border: 2px solid #59616e;
    border-radius: 1px 1px 4px 4px;
    background-color: #f1f3f7;
}

/* taskbar */
.taskbar {
    display: flex;
    align-items: center;
    height: 35px;
    padding-left: 7px;
    border-top: 1px solid #565e65;
    background-color: #646d74;
}
.task {
    width: 58px;
    height: 34px;
}
.task:first-child {
    width: 26px;
    margin-right: 10px;
}
.open {
    width: 52px;
    margin: 0 3px;
    border: 1px solid #a7adb2;
    background-color: #80888e;
}
.stacked {
    box-shadow: 2px 0 #646d74, 3px 0 #a7adb2;
}
.current {
    background-color: #c3c8cb;
}
.tray {
    display: flex;
    align-items: center;
    gap: 9px;
    margin-left: auto;
    padding-right: 12px;
    color: #fff;
}
.clock {
    display: flex;
    flex-direction: column;
    align-items: center;
    margin-left: 8px;
    font-size: 11px;
    line-height: 16px;
}
```
